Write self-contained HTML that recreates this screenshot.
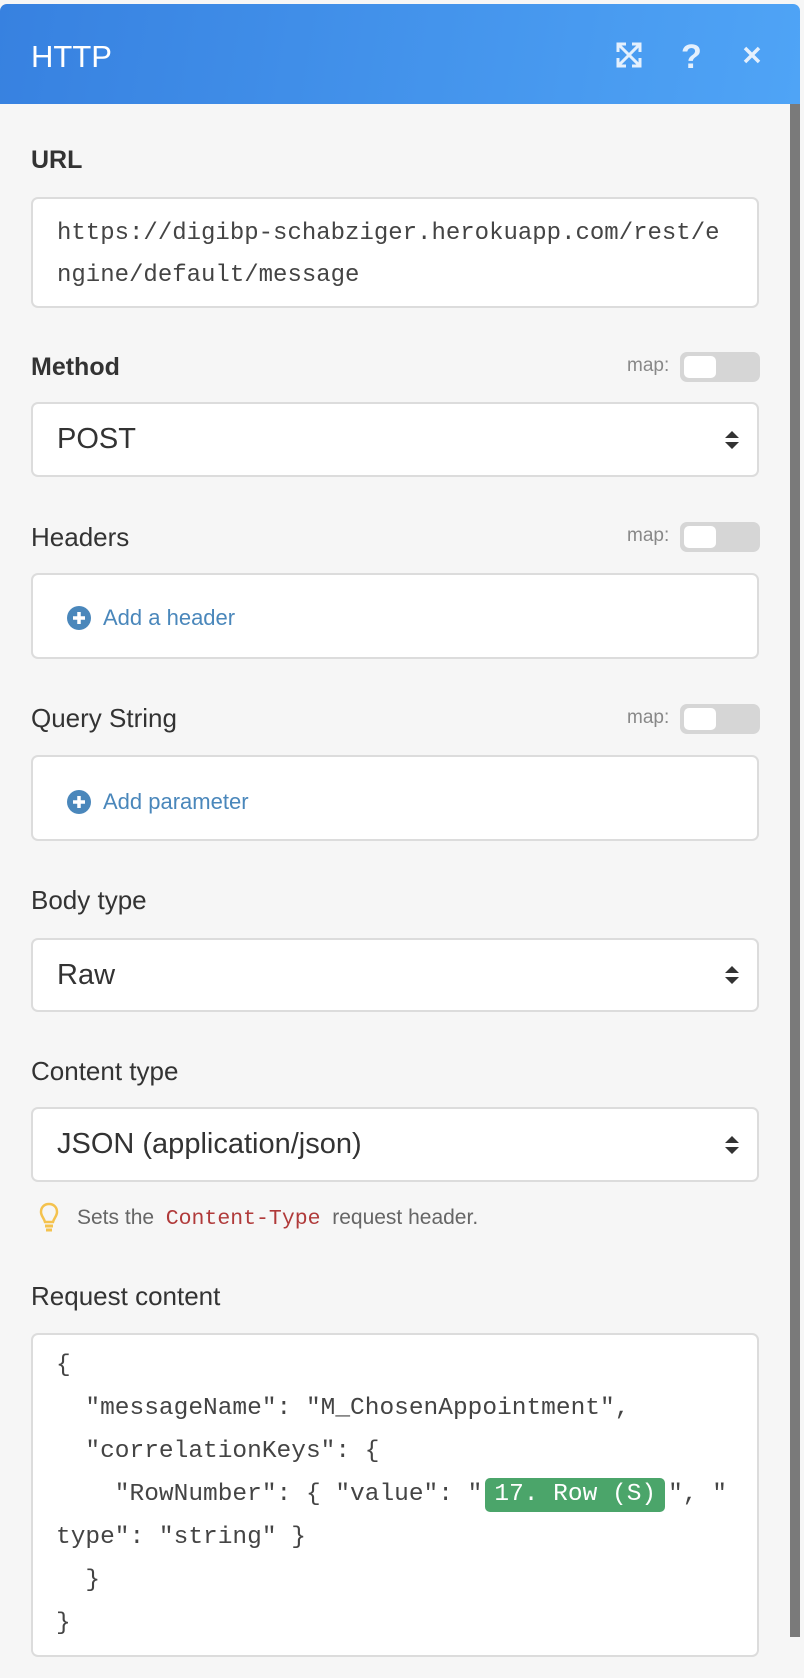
<!DOCTYPE html>
<html><head><meta charset="utf-8"><style>
*{box-sizing:border-box;margin:0;padding:0}
html,body{width:804px;height:1678px;background:#f6f6f6;overflow:hidden;font-family:"Liberation Sans",sans-serif;color:#333}
.hdr{position:absolute;left:0;top:4px;width:800px;height:100px;border-radius:7px 7px 0 0;background:linear-gradient(100deg,#3781e0,#4fa4f6)}
.hdr .t{position:absolute;left:31px;top:35px;font-size:31px;color:#fff}
.sb{position:absolute;left:790px;top:104px;width:10px;height:1533px;background:#7a7a7a}
.lbl{position:absolute;left:31px;font-size:26px;color:#333}
.b{font-weight:bold}
.box{position:absolute;left:31px;width:728px;background:#fff;border:2px solid #dcdcdc;border-radius:7px}
.mono{font-family:"Liberation Mono",monospace;color:#444}
.sel{font-size:29px;color:#333;padding-left:24px;display:flex;align-items:center}
.arr{position:absolute;right:17px;top:50%;margin-top:-10px;width:16px;height:20px}
.map{position:absolute;left:627px;font-size:19px;color:#888}
.tg{position:absolute;left:680px;width:80px;height:30px;background:#d6d6d6;border-radius:7px}
.tg i{position:absolute;left:4px;top:4px;width:32px;height:22px;background:#fff;border-radius:5px}
.add{position:absolute;left:34px;font-size:22px;color:#4a87bb;display:flex;align-items:center}
.add svg{margin-right:12px}
.code{position:absolute;left:56px;font-size:24.5px;white-space:pre;line-height:43px}
</style></head><body>
<div class="hdr"><div class="t">HTTP</div>
<svg style="position:absolute;left:616px;top:38px" width="26" height="26" viewBox="0 0 26 26" fill="none" stroke="#e4f0fd" stroke-width="3"><path d="M3 3L23 23M23 3L3 23"/><path d="M2 10V2h8M16 2h8v8M24 16v8h-8M10 24H2v-8"/></svg>
<div style="position:absolute;left:681px;top:34px;font-size:34px;font-weight:bold;color:#e4f0fd">?</div>
<svg style="position:absolute;left:743px;top:42px" width="18" height="18" viewBox="0 0 18 18" stroke="#e4f0fd" stroke-width="3.5"><path d="M2 2L16 16M16 2L2 16"/></svg>
</div>
<div class="sb"></div>

<div class="lbl b" style="top:146px;font-size:25px">URL</div>
<div class="box mono" style="top:197px;height:111px;padding:14px 0 0 24px;font-size:24px;line-height:42px">https://digibp-schabziger.herokuapp.com/rest/e<br>ngine/default/message</div>

<div class="lbl b" style="top:353px;font-size:25px">Method</div>
<div class="map" style="top:355px">map:</div><div class="tg" style="top:352px"><i></i></div>
<div class="box sel" style="top:402px;height:75px">POST<svg class="arr" viewBox="0 0 16 20"><path d="M8 1L15 8H1zM8 19L15 12H1z" fill="#333"/></svg></div>

<div class="lbl" style="top:522px">Headers</div>
<div class="map" style="top:525px">map:</div><div class="tg" style="top:522px"><i></i></div>
<div class="box" style="top:573px;height:86px"><div class="add" style="top:30px"><svg width="24" height="24" viewBox="0 0 24 24"><circle cx="12" cy="12" r="12" fill="#4a87bb"/><path d="M12 6v12M6 12h12" stroke="#fff" stroke-width="3.5"/></svg>Add a header</div></div>

<div class="lbl" style="top:703px">Query String</div>
<div class="map" style="top:707px">map:</div><div class="tg" style="top:704px"><i></i></div>
<div class="box" style="top:755px;height:86px"><div class="add" style="top:32px"><svg width="24" height="24" viewBox="0 0 24 24"><circle cx="12" cy="12" r="12" fill="#4a87bb"/><path d="M12 6v12M6 12h12" stroke="#fff" stroke-width="3.5"/></svg>Add parameter</div></div>

<div class="lbl" style="top:885px">Body type</div>
<div class="box sel" style="top:938px;height:74px">Raw<svg class="arr" viewBox="0 0 16 20"><path d="M8 1L15 8H1zM8 19L15 12H1z" fill="#333"/></svg></div>

<div class="lbl" style="top:1056px">Content type</div>
<div class="box sel" style="top:1107px;height:75px">JSON (application/json)<svg class="arr" viewBox="0 0 16 20"><path d="M8 1L15 8H1zM8 19L15 12H1z" fill="#333"/></svg></div>

<svg style="position:absolute;left:39px;top:1202px" width="20" height="30" viewBox="0 0 20 30" fill="none" stroke="#f4c24e" stroke-width="2.5"><path d="M10 2C5 2 2 5.5 2 10c0 4 3 6 4 10h8c1-4 4-6 4-10 0-4.5-3-8-8-8z"/><path d="M6 24h8M7 28h6" stroke-width="3"/></svg>
<div style="position:absolute;left:77px;top:1206px;font-size:21px;color:#666;white-space:pre">Sets the  <span class="mono" style="color:#b03a3a;font-size:21.5px">Content-Type</span>  request header.</div>

<div class="lbl" style="top:1281px;font-size:26px">Request content</div>
<div class="box" style="top:1333px;height:324px"></div>
<div class="code mono" style="top:1344px">{
  "messageName": "M_ChosenAppointment",
  "correlationKeys": {
    "RowNumber": { "value": "<span style="background:#4ba56a;color:#fff;border-radius:5px;padding:3px 9px;margin:0 3px;display:inline-block;line-height:28px">17. Row (S)</span>", "
type": "string" }
  }
}</div>
</body></html>
